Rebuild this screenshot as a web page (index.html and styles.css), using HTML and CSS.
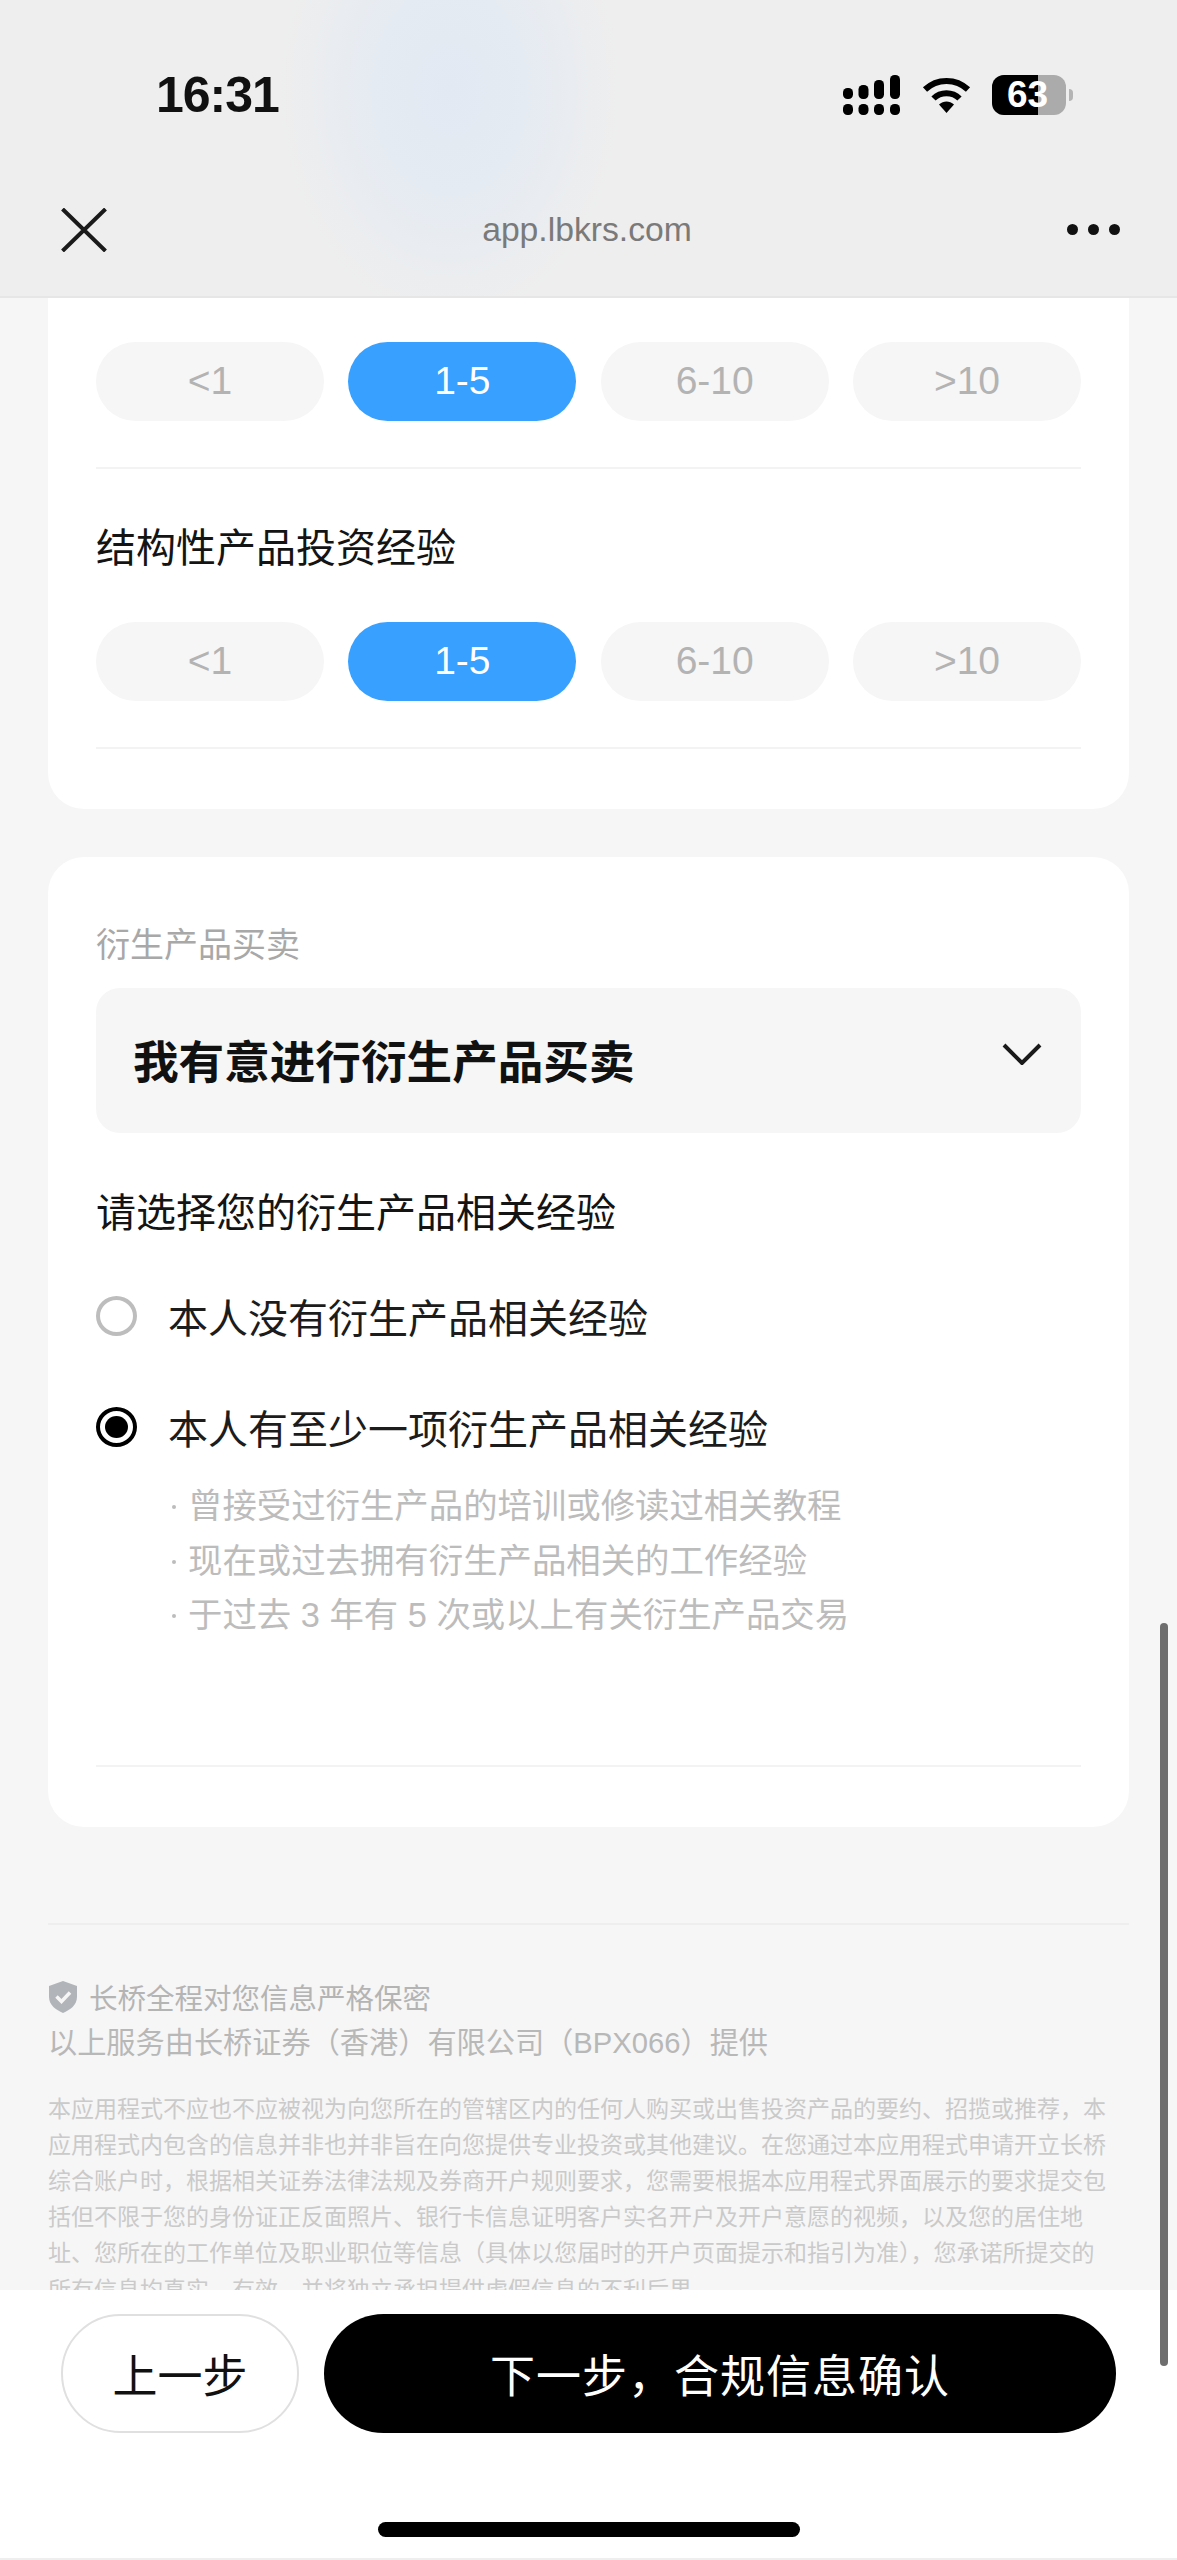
FILE: index.html
```html
<!DOCTYPE html>
<html lang="zh-CN">
<head>
<meta charset="utf-8">
<title>app.lbkrs.com</title>
<link rel="stylesheet" href="styles.css">
</head>
<body>
<div class="phone">
  <header class="top">
    <div class="status">
      <span class="time">16:31</span>
      <div class="status-icons">
        <svg class="signal" width="57" height="40" viewBox="0 0 57 40">
          <rect x="0" y="13" width="10" height="11" rx="4.5"/>
          <rect x="15.500" y="10" width="10" height="14" rx="4.5"/>
          <rect x="31" y="5" width="10" height="19" rx="4.500"/>
          <rect x="47" y="0" width="10" height="24" rx="4.500"/>
          <rect x="0" y="29" width="10" height="11" rx="4.500"/>
          <rect x="15.500" y="29" width="10" height="11" rx="4.500"/>
          <rect x="31" y="29" width="10" height="11" rx="4.500"/>
          <rect x="47" y="29" width="10" height="11" rx="4.500"/>
        </svg>
        <svg class="wifi" width="49" height="36" viewBox="0 0 49 36">
          <path class="wifi-arc" d="M3 12.500C15 1 34 1 46 12.500"/>
          <path class="wifi-arc" d="M11.500 21.500C18.500 14.500 30.500 14.500 37.500 21.500"/>
          <path class="wifi-fill" d="M17 27.500C21.500 23.500 27.500 23.500 32 27.500L24.500 36Z"/>
        </svg>
        <div class="battery">
          <div class="battery-body"><div class="battery-fill"></div><span class="battery-num">63</span></div>
          <div class="battery-nub"></div>
        </div>
      </div>
    </div>
    <nav class="navbar">
      <svg class="close" width="46" height="44" viewBox="0 0 46 44">
        <path d="M1.500 1L44.500 43M44.500 1L1.500 43"/>
      </svg>
      <span class="url">app.lbkrs.com</span>
      <div class="more"><i></i><i></i><i></i></div>
    </nav>
  </header>

  <main class="content">
    <section class="card card-first">
      <div class="pills">
        <div class="pill">&lt;1</div>
        <div class="pill pill-on">1-5</div>
        <div class="pill">6-10</div>
        <div class="pill">&gt;10</div>
      </div>
      <div class="rule rule-a"></div>
      <h3 class="q q-struct">结构性产品投资经验</h3>
      <div class="pills pills-b">
        <div class="pill">&lt;1</div>
        <div class="pill pill-on">1-5</div>
        <div class="pill">6-10</div>
        <div class="pill">&gt;10</div>
      </div>
      <div class="rule rule-a"></div>
    </section>

    <section class="card card-second">
      <div class="label">衍生产品买卖</div>
      <div class="select">
        <span>我有意进行衍生产品买卖</span>
        <svg class="chev" width="40" height="22" viewBox="0 0 40 22"><path d="M2 2L20 20L38 2"/></svg>
      </div>
      <h3 class="q q-exp">请选择您的衍生产品相关经验</h3>
      <div class="radio-row radio-row-a"><span class="radio"></span><span>本人没有衍生产品相关经验</span></div>
      <div class="radio-row radio-row-b"><span class="radio radio-on"></span><span>本人有至少一项衍生产品相关经验</span></div>
      <ul class="bullets">
        <li>曾接受过衍生产品的培训或修读过相关教程</li>
        <li>现在或过去拥有衍生产品相关的工作经验</li>
        <li>于过去 3 年有 5 次或以上有关衍生产品交易</li>
      </ul>
      <div class="rule rule-c"></div>
    </section>

    <footer class="legal">
      <div class="legal-rule"></div>
      <div class="secure">
        <svg class="shield" width="30" height="32" viewBox="0 0 30 32">
          <path class="shield-body" d="M15 0L29 5V16C29 24 22 29 15 32C8 29 1 24 1 16V5Z"/>
          <path class="shield-tick" d="M8.500 15.500L13.500 20.500L22 11.500"/>
        </svg>
        <span>长桥全程对您信息严格保密</span>
      </div>
      <div class="provider">以上服务由长桥证券（香港）有限公司（BPX066）提供</div>
      <p class="fine">本应用程式不应也不应被视为向您所在的管辖区内的任何人购买或出售投资产品的要约、招揽或推荐，本<br>应用程式内包含的信息并非也并非旨在向您提供专业投资或其他建议。在您通过本应用程式申请开立长桥<br>综合账户时，根据相关证券法律法规及券商开户规则要求，您需要根据本应用程式界面展示的要求提交包<br>括但不限于您的身份证正反面照片、银行卡信息证明客户实名开户及开户意愿的视频，以及您的居住地<br>址、您所在的工作单位及职业职位等信息（具体以您届时的开户页面提示和指引为准），您承诺所提交的<br>所有信息均真实、有效，并将独立承担提供虚假信息的不利后果。</p>
    </footer>
  </main>

  <div class="actionbar">
    <div class="actions">
      <button class="btn btn-prev">上一步</button>
      <button class="btn btn-next">下一步，合规信息确认</button>
    </div>
    <div class="home"></div>
  </div>

  <div class="scrollbar"></div>
</div>
</body>
</html>
```
FILE: styles.css
```css
* { box-sizing: border-box; }
html, body { margin: 0; padding: 0; }
body {
  font-family: "Liberation Sans", "Noto Sans CJK SC", sans-serif;
  background: #f6f6f6;
  color: #111;
}
.phone {
  position: relative;
  width: 1177px;
  height: 2560px;
  overflow: hidden;
  display: flex;
  flex-direction: column;
  background: #f6f6f6;
}

/* header */
.top {
  height: 298px;
  flex: none;
  background:
    radial-gradient(ellipse 170px 230px at 450px 90px, #e2e9f2 0%, #e5ebf2 45%, rgba(238,238,238,0) 100%),
    #eeeeee;
  border-bottom: 2px solid #e6e6e6;
}
.status {
  height: 167px;
  padding: 69px 104px 0 156px;
  display: flex;
  justify-content: space-between;
  align-items: flex-start;
}
.time { font-size: 50px; line-height: 50px; font-weight: 700; color: #111; margin-top: 1px; letter-spacing: -1px; }
.status-icons { display: flex; align-items: flex-start; margin-top: 6px; }
.signal { fill: #000; margin-right: 22px; }
.wifi { margin-top: 2px; margin-right: 21px; }
.wifi-arc { fill: none; stroke: #000; stroke-width: 6; }
.wifi-fill { fill: #000; }
.battery { display: flex; align-items: center; }
.battery-body {
  position: relative;
  width: 74px;
  height: 40px;
  border-radius: 12px;
  background: #ababab;
  overflow: hidden;
  display: flex;
  align-items: center;
  justify-content: center;
}
.battery-fill { position: absolute; left: 0; top: 0; bottom: 0; width: 46px; background: #000; }
.battery-num { position: relative; color: #fff; font-size: 37px; font-weight: 700; line-height: 40px; margin-left: -3px; }
.battery-nub { width: 4px; height: 12px; margin-left: 3px; background: #b4b4b4; border-radius: 0 6px 6px 0; }

.navbar {
  height: 129px;
  padding: 41px 57px 0 61px;
  display: flex;
  justify-content: space-between;
  align-items: flex-start;
}
.close { fill: none; stroke: #1a1a1a; stroke-width: 4; }
.url { font-size: 33.7px; line-height: 44px; color: #7a7a7a; margin-top: -1px; }
.more { display: flex; gap: 10px; margin-top: 16px; }
.more i { display: block; width: 11px; height: 11px; border-radius: 50%; background: #111; }

/* content */
.content { flex: 1; min-height: 0; overflow: hidden; }
.card {
  margin: 0 48px;
  padding: 0 48px;
  background: #fff;
  border-radius: 36px;
}
.card-first { padding-top: 44px; padding-bottom: 60px; border-radius: 0 0 36px 36px; }
.card-second { margin-top: 48px; padding-top: 64px; padding-bottom: 60px; }

.pills { display: grid; grid-template-columns: repeat(4, 228px); justify-content: space-between; }
.pills-b { margin-top: 46px; }
.pill {
  height: 79px;
  border-radius: 40px;
  background: #f6f6f6;
  color: #b3b3b3;
  font-size: 39px;
  line-height: 77px;
  text-align: center;
}
.pill-on { background: #38a0ff; color: #fff; }
.rule { height: 2px; background: #f3f3f3; }
.rule-a { margin-top: 46px; }
.rule-c { margin-top: 122px; }

.q { margin: 0; font-size: 40px; line-height: 56px; font-weight: 400; color: #141414; }
.q-struct { margin-top: 51px; }
.q-exp { margin-top: 52px; }

.label { font-size: 34px; line-height: 48px; color: #a8a8a8; }
.select {
  margin-top: 19px;
  height: 145px;
  border-radius: 24px;
  background: #f6f6f6;
  padding: 0 39px 4px 37px;
  display: flex;
  align-items: center;
  justify-content: space-between;
  font-size: 45.6px;
  font-weight: 700;
  color: #111;
}
.chev { fill: none; stroke: #1a1a1a; stroke-width: 4; margin-top: -10px; }

.radio-row { display: flex; align-items: center; gap: 31px; height: 56px; font-size: 40px; color: #1c1c1c; }
.radio-row-a { margin-top: 47px; }
.radio-row-b { margin-top: 55px; }
.radio {
  flex: none;
  width: 41px;
  height: 40px;
  border-radius: 50%;
  border: 4px solid #bdbdbd;
  background: #fff;
}
.radio-on { border: 4px solid #000; position: relative; }
.radio-on::after {
  content: "";
  position: absolute;
  left: 5px; right: 5px; top: 5px; bottom: 5px;
  border-radius: 50%;
  background: #000;
}

.bullets { list-style: none; margin: 24px 0 0; padding: 0 0 0 92px; font-size: 34.4px; line-height: 54.5px; color: #bcbcbc; }
.bullets li { position: relative; }
.bullets li::before {
  content: "";
  position: absolute;
  left: -16px;
  top: 26px;
  width: 4px;
  height: 4px;
  border-radius: 50%;
  background: #bcbcbc;
}

/* legal */
.legal { padding: 96px 0 0 48px; }
.legal-rule { height: 2px; width: 1081px; background: #eeeeee; }
.secure { margin-top: 49px; display: flex; align-items: center; gap: 11px; height: 46px; font-size: 28.5px; color: #b4b4b4; }
.shield { flex: none; }
.shield-body { fill: #b1b4b8; }
.shield-tick { fill: none; stroke: #f6f6f6; stroke-width: 3.500; }
.provider { font-size: 29.2px; line-height: 46px; color: #b8b8b8; white-space: nowrap; }
.fine { margin: 25px 0 0; font-size: 23px; line-height: 36.2px; color: #cacaca; white-space: nowrap; }

/* action bar */
.actionbar {
  flex: none;
  height: 270px;
  background: #fff;
  padding-top: 24px;
  border-bottom: 2px solid #eeeeee;
}
.actions { display: flex; gap: 25px; padding: 0 61px; }
.btn {
  height: 119px;
  border-radius: 60px;
  font-family: inherit;
  font-size: 45px;
  padding: 0;
  cursor: pointer;
}
.btn-prev { width: 238px; flex: none; background: #fff; border: 2px solid #e0e0e0; color: #111; }
.btn-next { flex: 1; background: #000; border: 0; color: #fff; letter-spacing: 1px; }
.home { width: 422px; height: 15px; margin: 89px auto 0; border-radius: 8px; background: #000; }

.scrollbar {
  position: absolute;
  left: 1160px;
  top: 1623px;
  width: 8px;
  height: 743px;
  border-radius: 4px;
  background: #6e6e6e;
}
```
